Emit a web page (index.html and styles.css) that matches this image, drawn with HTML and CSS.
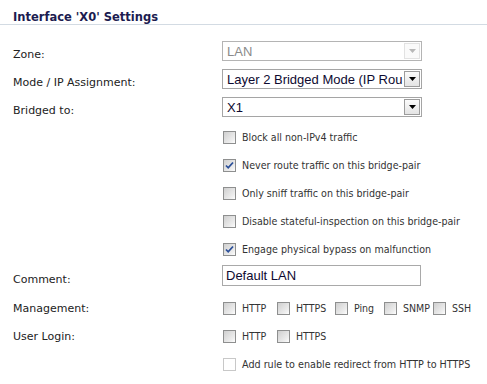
FILE: index.html
```html
<!DOCTYPE html>
<html lang="en">
<head>
  <meta charset="UTF-8">
  <title>Interface Settings</title>
  <link rel="stylesheet" href="styles.css">
</head>
<body>
  <div class="panel">
    <h1 class="title">Interface 'X0' Settings</h1>

    <div class="rows">
      <div class="row ctl">
        <span class="label">Zone:</span>
        <div class="select disabled">
          <span class="value">LAN</span>
          <span class="btn"><svg width="7" height="4" viewBox="0 0 7 4"><path d="M0 0h7L3.5 4z"/></svg></span>
        </div>
      </div>

      <div class="row ctl">
        <span class="label">Mode / IP Assignment:</span>
        <div class="select">
          <span class="value">Layer 2 Bridged Mode (IP Rou</span>
          <span class="btn"><svg width="7" height="4" viewBox="0 0 7 4"><path d="M0 0h7L3.5 4z"/></svg></span>
        </div>
      </div>

      <div class="row ctl">
        <span class="label">Bridged to:</span>
        <div class="select">
          <span class="value">X1</span>
          <span class="btn"><svg width="7" height="4" viewBox="0 0 7 4"><path d="M0 0h7L3.5 4z"/></svg></span>
        </div>
      </div>

      <div class="row first">
        <span class="label"></span>
        <label class="check"><span class="box"></span>Block all non-IPv4 traffic</label>
      </div>
      <div class="row">
        <span class="label"></span>
        <label class="check"><span class="box"><svg width="9" height="9" viewBox="0 0 9 9"><path d="M1 4.5l2.2 2.3L8 1.5"/></svg></span>Never route traffic on this bridge-pair</label>
      </div>
      <div class="row">
        <span class="label"></span>
        <label class="check"><span class="box"></span>Only sniff traffic on this bridge-pair</label>
      </div>
      <div class="row">
        <span class="label"></span>
        <label class="check"><span class="box"></span>Disable stateful-inspection on this bridge-pair</label>
      </div>
      <div class="row">
        <span class="label"></span>
        <label class="check"><span class="box"><svg width="9" height="9" viewBox="0 0 9 9"><path d="M1 4.5l2.2 2.3L8 1.5"/></svg></span>Engage physical bypass on malfunction</label>
      </div>

      <div class="row ctl comment">
        <span class="label">Comment:</span>
        <input class="text" type="text" value="Default LAN">
      </div>

      <div class="row after-comment">
        <span class="label">Management:</span>
        <div class="checks">
          <label class="check small w-http"><span class="box"></span>HTTP</label>
          <label class="check small w-https"><span class="box"></span>HTTPS</label>
          <label class="check small w-ping"><span class="box"></span>Ping</label>
          <label class="check small w-snmp"><span class="box"></span>SNMP</label>
          <label class="check small"><span class="box"></span>SSH</label>
        </div>
      </div>

      <div class="row">
        <span class="label">User Login:</span>
        <div class="checks">
          <label class="check small w-http"><span class="box"></span>HTTP</label>
          <label class="check small"><span class="box"></span>HTTPS</label>
        </div>
      </div>

      <div class="row">
        <span class="label"></span>
        <label class="check redirect"><span class="box off"></span>Add rule to enable redirect from HTTP to HTTPS</label>
      </div>
    </div>
  </div>
</body>
</html>
```

FILE: styles.css
```css
body {
  margin: 0;
  background: #fff;
  font-family: "DejaVu Sans", Verdana, sans-serif;
  font-size: 11px;
  color: #222;
}
.panel {
  width: 487px;
}
.title {
  margin: 0;
  padding: 10px 0 0 13px;
  height: 14px;
  font-size: 11.5px;
  font-weight: bold;
  color: #1c1c50;
  border-bottom: 1px solid #d3dbe3;
}
.rows {
  padding: 12px 0 0 13px;
}
.row {
  display: flex;
  align-items: center;
  height: 28px;
}
.label {
  width: 209px;
  flex: none;
}
.ctl .label {
  padding-top: 7px;
}
.select {
  display: flex;
  align-items: center;
  width: 198px;
  height: 18px;
  border: 1px solid #a5a5a5;
  font-family: "Liberation Sans", Arial, sans-serif;
  font-size: 13px;
  color: #0e0a30;
  background: #fff;
}
.select .value {
  flex: 1;
  padding-left: 4px;
  white-space: nowrap;
  overflow: hidden;
}
.select .btn {
  flex: none;
  display: flex;
  align-items: center;
  justify-content: center;
  width: 14px;
  height: 14px;
  margin-right: 1px;
  border: 1px solid #9c9c9c;
  background: linear-gradient(#fbfbfb, #e4e4e4);
}
.select .btn path {
  fill: #000;
}
.select.disabled {
  color: #8a8a8a;
  border-color: #b4b4b4;
}
.select.disabled .btn {
  border-color: #e2e2e2;
  background: #fafafa;
}
.select.disabled .btn path {
  fill: #b8b8b8;
}
.first {
  margin-top: 2px;
}
.check {
  display: flex;
  align-items: center;
  font-family: "DejaVu Sans Condensed", "DejaVu Sans", sans-serif;
  font-stretch: condensed;
  font-size: 10.6px;
  color: #333;
  white-space: nowrap;
}
.check.redirect {
  font-size: 10.7px;
}
.box {
  flex: none;
  display: flex;
  align-items: center;
  justify-content: center;
  width: 11px;
  height: 11px;
  margin: 0 6px 0 1px;
  border: 1px solid #8e8f8f;
  background: linear-gradient(135deg, #cfcfcf, #eeeeee 75%, #fff);
}
.box svg path {
  fill: none;
  stroke: #2b4f99;
  stroke-width: 1.8;
}
.box.off {
  border-color: #c8c8c8;
  background: #fff;
}
.comment {
  height: 25px;
}
.after-comment {
  margin-top: 6px;
}
.text {
  box-sizing: border-box;
  width: 199px;
  height: 21px;
  margin: 0;
  padding: 0 3px;
  border: 1px solid #a9a9a9;
  font-family: "Liberation Sans", Arial, sans-serif;
  font-size: 13px;
  color: #0e0a30;
  outline: none;
}
.checks {
  display: flex;
}
.check.small {
  font-size: 10.5px;
}
.w-http { width: 54px; }
.w-https { width: 58px; }
.w-ping { width: 49px; }
.w-snmp { width: 49px; }
```
